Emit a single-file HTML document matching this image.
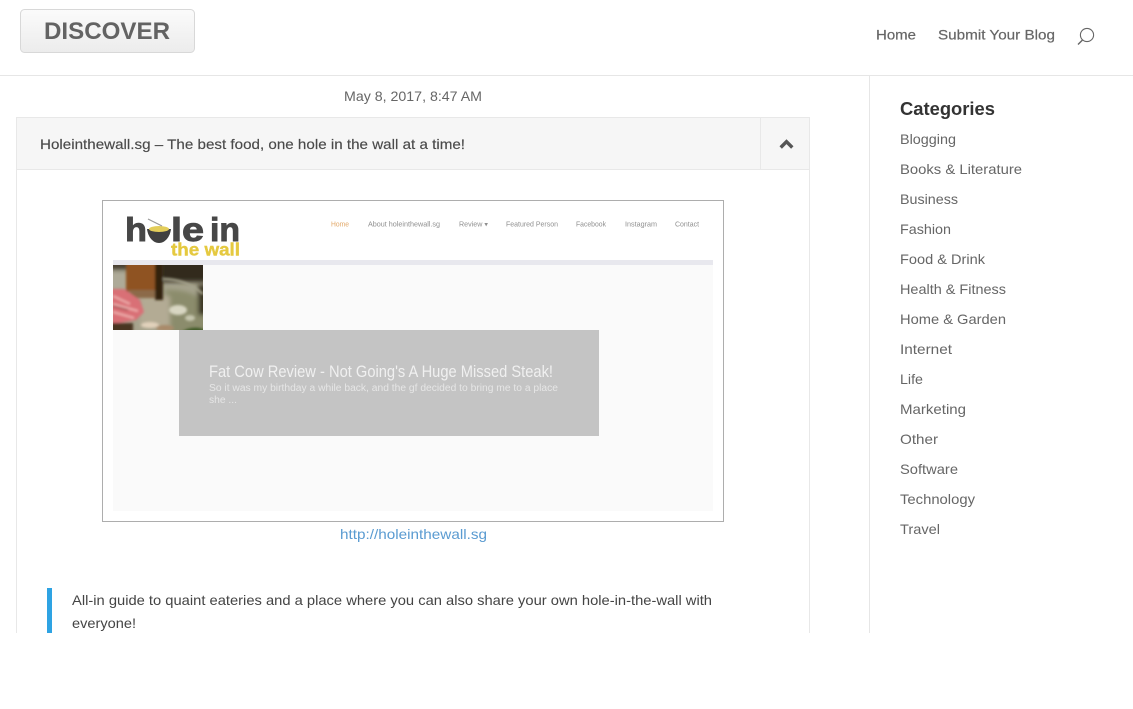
<!DOCTYPE html>
<html><head><meta charset="utf-8"><title>Discover</title>
<style>
html,body{margin:0;padding:0;background:#fff;width:1133px;height:709px;overflow:hidden}
svg{display:block}
text{font-family:"Liberation Sans",sans-serif}
</style></head><body>
<svg width="1133" height="709" viewBox="0 0 1133 709" xmlns="http://www.w3.org/2000/svg">
<defs>
<linearGradient id="btn" x1="0" y1="0" x2="0" y2="1"><stop offset="0" stop-color="#fbfbfb"/><stop offset="1" stop-color="#ececec"/></linearGradient>
<filter id="b1" x="-20%" y="-20%" width="140%" height="140%"><feGaussianBlur stdDeviation="1.2"/></filter>
<filter id="b2" x="-20%" y="-20%" width="140%" height="140%"><feGaussianBlur stdDeviation="2.5"/></filter>
<filter id="s" x="-5%" y="-20%" width="110%" height="140%"><feGaussianBlur stdDeviation="0.35"/></filter>
<clipPath id="food"><rect x="113" y="265" width="90" height="65"/></clipPath>
</defs>

<!-- header -->
<rect x="20.5" y="9.5" width="174" height="43" rx="4" fill="url(#btn)" stroke="#d8d8d8"/>
<text x="44" y="39" font-size="24.5" font-weight="700" fill="#636363" textLength="126" lengthAdjust="spacingAndGlyphs">DISCOVER</text>
<text x="876" y="39.5" font-size="14" fill="#666" textLength="40" lengthAdjust="spacingAndGlyphs" stroke="#666" stroke-width=".2">Home</text>
<text x="938" y="39.5" font-size="14" fill="#666" textLength="117" lengthAdjust="spacingAndGlyphs" stroke="#666" stroke-width=".2">Submit Your Blog</text>
<circle cx="1087" cy="35" r="6.6" fill="none" stroke="#666" stroke-width="1.1"/>
<path d="M1082.5 40 L1078 44.5" stroke="#666" stroke-width="1.4" fill="none"/>
<rect x="0" y="75" width="1133" height="1" fill="#e6e6e6"/>

<!-- sidebar divider -->
<rect x="869" y="76" width="1" height="557" fill="#e6e6e6"/>

<!-- date -->
<text x="344" y="101" font-size="14" fill="#666" textLength="138" lengthAdjust="spacingAndGlyphs">May 8, 2017, 8:47 AM</text>

<!-- toggle panel -->
<rect x="16" y="117" width="794" height="53" fill="#f6f6f6"/>
<path d="M16.5 633V117.5H809.5V633" fill="none" stroke="#e8e8e8"/>
<rect x="17" y="169" width="792" height="1" fill="#e8e8e8"/>
<rect x="760" y="118" width="1" height="51" fill="#e8e8e8"/>
<text x="40" y="149" font-size="14" fill="#4a4a4a" stroke="#4a4a4a" stroke-width=".15" textLength="425" lengthAdjust="spacingAndGlyphs">Holeinthewall.sg – The best food, one hole in the wall at a time!</text>
<path d="M780.7 147.5L786.5 141.7L792.3 147.5" fill="none" stroke="#555" stroke-width="3.4"/>

<!-- screenshot frame -->
<rect x="102.5" y="200.5" width="621" height="321" fill="#fff" stroke="#adadad"/>
<rect x="113" y="260" width="600" height="251" fill="#fafafa"/>
<rect x="113" y="260" width="600" height="5" fill="#e8e8ee"/>

<!-- embedded logo -->
<g filter="url(#s)">
<text x="125" y="241" font-size="33" font-weight="700" fill="#474747" stroke="#474747" stroke-width=".9" textLength="22" lengthAdjust="spacingAndGlyphs">h</text>
<path d="M147 229H171C170 237 165 243 159 243C153 243 148 237 147 229Z" fill="#3f3f3f"/>
<ellipse cx="159" cy="229" rx="10" ry="3" fill="#e3cd5a"/>
<path d="M148 219L162 226" stroke="#999" stroke-width="1.2"/>
<text x="171" y="241" font-size="33" font-weight="700" fill="#474747" stroke="#474747" stroke-width=".9" textLength="33" lengthAdjust="spacingAndGlyphs">le</text>
<text x="210" y="241" font-size="33" font-weight="700" fill="#474747" stroke="#474747" stroke-width=".9" textLength="30" lengthAdjust="spacingAndGlyphs">in</text>
<text x="171" y="255.5" font-size="17.5" font-weight="700" fill="#e5c93f" stroke="#e5c93f" stroke-width=".4" textLength="69" lengthAdjust="spacingAndGlyphs">the wall</text>
</g>

<!-- embedded nav -->
<g font-size="7" fill="#8f8f8f" filter="url(#s)">
<text x="331" y="226.5" fill="#e2a868" textLength="18" lengthAdjust="spacingAndGlyphs">Home</text>
<text x="368" y="226.5" textLength="72" lengthAdjust="spacingAndGlyphs">About holeinthewall.sg</text>
<text x="459" y="226.5" textLength="29" lengthAdjust="spacingAndGlyphs">Review ▾</text>
<text x="506" y="226.5" textLength="52" lengthAdjust="spacingAndGlyphs">Featured Person</text>
<text x="576" y="226.5" textLength="30" lengthAdjust="spacingAndGlyphs">Facebook</text>
<text x="625" y="226.5" textLength="32" lengthAdjust="spacingAndGlyphs">Instagram</text>
<text x="675" y="226.5" textLength="24" lengthAdjust="spacingAndGlyphs">Contact</text>
</g>

<!-- embedded food photo -->
<g clip-path="url(#food)">
<rect x="113" y="265" width="90" height="65" fill="#a5a28c"/>
<g filter="url(#b2)">
<rect x="108" y="258" width="30" height="12" fill="#4a3f30"/>
<rect x="160" y="258" width="50" height="24" fill="#33291a"/>
<path d="M165 290 Q190 288 210 305 L210 335 L170 335Z" fill="#8b8c6c"/>
<rect x="108" y="272" width="25" height="18" fill="#aeaa98"/>
<rect x="140" y="296" width="30" height="32" fill="#b3ab94"/>
<rect x="198" y="285" width="10" height="30" fill="#3a3520"/>
</g>
<g filter="url(#b1)">
<rect x="126" y="262" width="30" height="30" fill="#8f5223"/>
<path d="M128 290H156V298H134Z" fill="#8c6a48"/>
<rect x="155" y="262" width="8" height="38" fill="#30230f"/>
<path d="M163 279 Q185 279 203 294" stroke="#a5a38c" stroke-width="2.5" fill="none"/>
<path d="M110 289 L124 289 L140 300 L144 312 L136 320 L112 324Z" fill="#d96f76"/>
<path d="M113 296L130 304M113 304L138 311M113 312L134 318" stroke="#eeb0ae" stroke-width="2" fill="none"/>
<path d="M113 306 L128 310" stroke="#8a3a38" stroke-width="1.2"/>
<rect x="105" y="323" width="28" height="10" fill="#4a3520"/>
<ellipse cx="178" cy="310" rx="9" ry="5" fill="#d8d6c2"/>
<ellipse cx="190" cy="318" rx="5" ry="3" fill="#c6c6ae"/>
<ellipse cx="150" cy="325" rx="9" ry="3" fill="#e2d2bc"/>
<ellipse cx="165" cy="328" rx="9" ry="3" fill="#a98a6a"/>
<path d="M180 333 Q192 324 206 330 V335H180Z" fill="#3f5a28"/>
</g>
</g>

<!-- embedded grey slide card -->
<rect x="179" y="330" width="420" height="106" fill="#c4c4c4"/>
<text x="209" y="377" font-size="17" fill="#f0f0f0" textLength="344" lengthAdjust="spacingAndGlyphs">Fat Cow Review - Not Going's A Huge Missed Steak!</text>
<text x="209" y="391" font-size="10" fill="#e6e6e6" textLength="349" lengthAdjust="spacingAndGlyphs">So it was my birthday a while back, and the gf decided to bring me to a place</text>
<text x="209" y="403" font-size="10" fill="#e6e6e6" textLength="28" lengthAdjust="spacingAndGlyphs">she ...</text>

<!-- link -->
<text x="340" y="539" font-size="14" fill="#5a9bd1" textLength="147" lengthAdjust="spacingAndGlyphs">http://holeinthewall.sg</text>

<!-- blockquote -->
<rect x="47" y="588" width="5" height="45" fill="#2ea3e3"/>
<text x="72" y="605" font-size="14" fill="#444" textLength="640" lengthAdjust="spacingAndGlyphs">All-in guide to quaint eateries and a place where you can also share your own hole-in-the-wall with</text>
<text x="72" y="628" font-size="14" fill="#444" textLength="64" lengthAdjust="spacingAndGlyphs">everyone!</text>

<!-- categories -->
<text x="900" y="115" font-size="18" font-weight="700" fill="#333" textLength="95" lengthAdjust="spacingAndGlyphs">Categories</text>
<g font-size="14" fill="#666">
<text x="900" y="144" textLength="56" lengthAdjust="spacingAndGlyphs">Blogging</text>
<text x="900" y="174" textLength="122" lengthAdjust="spacingAndGlyphs">Books &amp; Literature</text>
<text x="900" y="204" textLength="58" lengthAdjust="spacingAndGlyphs">Business</text>
<text x="900" y="234" textLength="51" lengthAdjust="spacingAndGlyphs">Fashion</text>
<text x="900" y="264" textLength="85" lengthAdjust="spacingAndGlyphs">Food &amp; Drink</text>
<text x="900" y="294" textLength="106" lengthAdjust="spacingAndGlyphs">Health &amp; Fitness</text>
<text x="900" y="324" textLength="106" lengthAdjust="spacingAndGlyphs">Home &amp; Garden</text>
<text x="900" y="354" textLength="52" lengthAdjust="spacingAndGlyphs">Internet</text>
<text x="900" y="384" textLength="23" lengthAdjust="spacingAndGlyphs">Life</text>
<text x="900" y="414" textLength="66" lengthAdjust="spacingAndGlyphs">Marketing</text>
<text x="900" y="444" textLength="38" lengthAdjust="spacingAndGlyphs">Other</text>
<text x="900" y="474" textLength="58" lengthAdjust="spacingAndGlyphs">Software</text>
<text x="900" y="504" textLength="75" lengthAdjust="spacingAndGlyphs">Technology</text>
<text x="900" y="534" textLength="40" lengthAdjust="spacingAndGlyphs">Travel</text>
</g>
</svg>
</body></html>
